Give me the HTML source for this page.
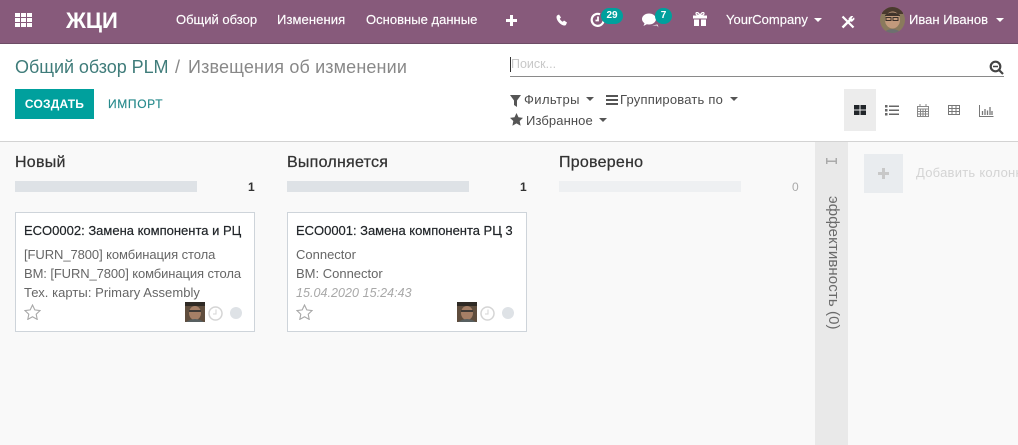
<!DOCTYPE html>
<html><head><meta charset="utf-8"><style>
html,body{margin:0;padding:0}
body{width:1018px;height:445px;overflow:hidden;position:relative;background:#fff;font-family:"Liberation Sans",sans-serif;color:#4c4c4c}
.a,.t{position:absolute}
.t{white-space:nowrap;line-height:16px}
.nav{color:#fff;font-size:13px;top:12px;-webkit-text-stroke:.15px #fff}
.card{position:absolute;top:212px;width:238px;height:118px;background:#fff;border:1px solid #ced4da}
.h{font-size:16px;color:#333;top:155px;letter-spacing:.25px;-webkit-text-stroke:.25px #333}
.bar{position:absolute;top:181px;width:182px;height:11px;background:#dee2e6}
.n{font-size:12px;font-weight:bold;color:#333;top:179px}
.b{font-size:13px;color:#212529;top:223px;-webkit-text-stroke:.2px #212529}
.g{font-size:13px;color:#666}
.f{font-size:13px;color:#4c4c4c}
</style></head><body>
<!-- top bar -->
<div class="a" style="left:0;top:0;width:1018px;height:43px;background:#875a7b;border-bottom:1px solid #6d4c66"></div>
<svg class="a" style="left:15px;top:13px" width="18" height="14" fill="#fff"><rect width="5" height="4"/><rect x="6" width="5" height="4"/><rect x="12" width="5" height="4"/><rect y="5" width="5" height="4"/><rect x="6" y="5" width="5" height="4"/><rect x="12" y="5" width="5" height="4"/><rect y="10" width="5" height="4"/><rect x="6" y="10" width="5" height="4"/><rect x="12" y="10" width="5" height="4"/></svg>
<div class="t" style="left:66px;top:10px;font-size:22px;line-height:22px;font-weight:bold;color:#fff">ЖЦИ</div>
<div class="t nav" style="left:176px">Общий обзор</div>
<div class="t nav" style="left:277px;letter-spacing:.1px">Изменения</div>
<div class="t nav" style="left:366px;letter-spacing:.02px">Основные данные</div>
<svg class="a" style="left:506px;top:15px" width="11" height="11" fill="#fff"><path d="M4 0h3v4h4v3H7v4H4V7H0V4h4z"/></svg>
<svg class="a" style="left:556px;top:14px" width="12" height="12" fill="#fff"><path d="M1 1.500 3 .5l2 3-1.200 1.200c.6 1.400 1.600 2.400 3 3L8 6.500l3 2-1 2.200c-.5.8-1.600 1-2.600.7C4.400 10.500 1.500 7.500.7 4.500.4 3.300.5 2.200 1 1.500z"/></svg>
<svg class="a" style="left:590px;top:12px" width="16" height="16" fill="none" stroke="#fff" stroke-width="2.200"><path d="M10 2.300A6 6 0 1 0 13.700 8"/><path d="M8 4.500V8.500H5.500" stroke-width="1.800"/></svg>
<div class="a" style="left:601px;top:8px;width:22px;height:16px;border-radius:8px;background:#00a09d"></div>
<div class="t" style="left:601px;top:8px;width:22px;text-align:center;color:#fff;font-size:10px;font-weight:bold">29</div>
<svg class="a" style="left:642px;top:13px" width="18" height="15" fill="#fff"><ellipse cx="7" cy="6" rx="7" ry="5.500"/><path d="M3 9 1.500 13 7 10z"/><path d="M10 12.500h5l1.500 2-1-3z"/></svg>
<div class="a" style="left:655px;top:8px;width:17px;height:16px;border-radius:8px;background:#00a09d"></div>
<div class="t" style="left:655px;top:8px;width:17px;text-align:center;color:#fff;font-size:10px;font-weight:bold">7</div>
<svg class="a" style="left:693px;top:12px" width="14" height="14" fill="#fff"><path d="M0 3.500h14v3H0zM1 7.500h5V14H1zM8 7.500h5V14H8zM6 3.500h2v3H6z"/><path d="M7 3.500C5 3.500 3 3 3 1.500S5.500 0 7 3.500C8.500 0 11 0 11 1.500S9 3.500 7 3.500z" fill="none" stroke="#fff" stroke-width="1.200"/></svg>
<div class="t nav" style="left:726px">YourCompany</div>
<div class="a" style="left:814px;top:18px;border:4px solid transparent;border-top-color:#fff;border-bottom:0"></div>
<svg class="a" style="left:841px;top:15px" width="14" height="14" stroke="#fff" fill="none"><path d="M1.500 12.500 9 5" stroke-width="2.400"/><path d="M8.500 6 7.800 3.500 10 1.200l2 .2-1.700 1.800 1 1 1.700-1.600.2 1.800-2.200 2.200z" fill="#fff" stroke-width=".5"/><path d="M1.500 1.500 12.500 12.500" stroke-width="2.200"/></svg>
<svg class="a" style="left:880px;top:7px" width="25" height="26"><defs><clipPath id="c"><ellipse cx="12.500" cy="13" rx="12.500" ry="13"/></clipPath></defs><g clip-path="url(#c)"><rect width="25" height="26" fill="#8a7a5c"/><path d="M2 0h21v7H2z" fill="#4a3a2e"/><ellipse cx="12.500" cy="13" rx="7.500" ry="8.500" fill="#c29a7c"/><path d="M5 8q7-5 15 0v1H5z" fill="#3f332b"/><rect x="6" y="10.500" width="5" height="3" fill="none" stroke="#3a302a"/><rect x="13" y="10.500" width="5" height="3" fill="none" stroke="#3a302a"/><path d="M3 26q9-8 19 0z" fill="#6d6f70"/></g></svg>
<div class="t nav" style="left:909px;letter-spacing:.02px">Иван Иванов</div>
<div class="a" style="left:996px;top:18px;border:4px solid transparent;border-top-color:#fff;border-bottom:0"></div>

<!-- control panel -->
<div class="t" style="left:15px;top:57px;font-size:18px;line-height:20px;color:#3f7c7a;letter-spacing:-.05px">Общий обзор PLM</div>
<div class="t" style="left:175px;top:57px;font-size:18px;line-height:20px;color:#888">/</div>
<div class="t" style="left:188px;top:57px;font-size:18px;line-height:20px;color:#888;letter-spacing:.14px">Извещения об изменении</div>
<div class="a" style="left:15px;top:89px;width:79px;height:30px;background:#00a09d"></div>
<div class="t" style="left:15px;top:96px;width:79px;text-align:center;font-size:12px;font-weight:bold;color:#fff;letter-spacing:.2px">СОЗДАТЬ</div>
<div class="t" style="left:108px;top:96px;font-size:12px;color:#278a8c;letter-spacing:.65px;-webkit-text-stroke:.15px #278a8c">ИМПОРТ</div>

<div class="a" style="left:510px;top:57px;width:1px;height:15px;background:#333"></div>
<div class="t" style="left:511px;top:56px;font-size:12.500px;color:#c8c8c8">Поиск...</div>
<div class="a" style="left:510px;top:76px;width:494px;height:1px;background:#8a8a8a"></div>
<svg class="a" style="left:989px;top:60px" width="15" height="15" fill="none" stroke="#444" stroke-width="2.200"><circle cx="6.500" cy="6.500" r="4.800"/><path d="M10 10l4 4"/><path d="M4 6.500h5" stroke-width="1.500"/></svg>

<svg class="a" style="left:510px;top:95px" width="12" height="12" fill="#555"><path d="M0 0h11L7 5.500V12L4 10V5.500z"/></svg>
<div class="t f" style="left:524px;top:92px;letter-spacing:.4px">Фильтры</div>
<div class="a" style="left:586px;top:97px;border:4px solid transparent;border-top-color:#555;border-bottom:0"></div>
<svg class="a" style="left:606px;top:95px" width="12" height="10" fill="#555"><rect width="12" height="2"/><rect y="4" width="12" height="2"/><rect y="8" width="12" height="2"/></svg>
<div class="t f" style="left:620px;top:92px;letter-spacing:.2px">Группировать по</div>
<div class="a" style="left:730px;top:97px;border:4px solid transparent;border-top-color:#555;border-bottom:0"></div>
<svg class="a" style="left:510px;top:113px" width="14" height="13" fill="#555"><path d="M6.500 0l2 4.300 4.500.6-3.300 3.100.9 4.700-4.100-2.300-4.100 2.300.9-4.700L0 4.900l4.500-.6z"/></svg>
<div class="t f" style="left:526px;top:113px;letter-spacing:.1px">Избранное</div>
<div class="a" style="left:599px;top:118px;border:4px solid transparent;border-top-color:#555;border-bottom:0"></div>

<div class="a" style="left:844px;top:89px;width:32px;height:42px;background:#ececec"></div>
<svg class="a" style="left:854px;top:105px" width="12" height="10" fill="#212529"><rect width="5.500" height="4.500"/><rect x="6.500" width="5.500" height="4.500"/><rect y="5.500" width="5.500" height="4.500"/><rect x="6.500" y="5.500" width="5.500" height="4.500"/></svg>
<svg class="a" style="left:885px;top:105px" width="14" height="11" fill="#666"><rect width="2.500" height="2.500"/><rect x="4" y=".5" width="10" height="1.500"/><rect y="4" width="2.500" height="2.500"/><rect x="4" y="4.500" width="10" height="1.500"/><rect y="8" width="2.500" height="2.500"/><rect x="4" y="8.500" width="10" height="1.500"/></svg>
<svg class="a" style="left:917px;top:104px" width="12" height="13" fill="none" stroke="#888"><rect x=".5" y="2.500" width="11" height="10"/><path d="M.5 5h11M.5 7.500h11M.5 10h11M3.500 5v7.500M6 5v7.500M8.500 5v7.500M3 0v3M9 0v3"/></svg>
<svg class="a" style="left:948px;top:105px" width="12" height="10" fill="none" stroke="#777"><rect x=".5" y=".5" width="11" height="9"/><path d="M.5 3.500h11M.5 6.500h11M4 .5v9M8 .5v9"/></svg>
<svg class="a" style="left:979px;top:105px" width="15" height="12" fill="none" stroke="#777"><path d="M.5 0v11.500h14"/><path d="M3.500 10V6M6 10V4M8.500 10V5.500M11 10V2M13 10V6" stroke-width="1.300"/></svg>
<div class="a" style="left:0;top:141px;width:1018px;height:1px;background:#d3d3d3"></div>

<!-- kanban -->
<div class="a" style="left:0;top:142px;width:1018px;height:303px;background:#f9f9f9"></div>
<div class="t h" style="left:15px">Новый</div>
<div class="bar" style="left:15px"></div>
<div class="t n" style="left:248px">1</div>
<div class="card" style="left:15px"></div>
<div class="t b" style="left:24px">ECO0002: Замена компонента и РЦ</div>
<div class="t g" style="left:24px;top:247px;letter-spacing:-.08px">[FURN_7800] комбинация стола</div>
<div class="t g" style="left:24px;top:266px;letter-spacing:-.1px">BM: [FURN_7800] комбинация стола</div>
<div class="t g" style="left:24px;top:285px;letter-spacing:.05px">Тех. карты: Primary Assembly</div>
<svg class="a" style="left:24px;top:304px" width="17" height="16" fill="none" stroke="#a8a8a8" stroke-width="1.100"><path d="M8.500 1l2.300 4.900 5.200.7-3.800 3.600 1 5.200-4.700-2.600-4.700 2.600 1-5.200L1 6.600l5.200-.7z"/></svg>
<svg class="a" style="left:185px;top:302px" width="20" height="20"><rect width="20" height="20" fill="#5f4d3d"/><rect width="20" height="4" fill="#2f2a25"/><ellipse cx="10" cy="11" rx="6" ry="7" fill="#a57f66"/><rect x="4" y="8" width="12" height="2" fill="#3f3a36"/><path d="M1 20q9-6 18 0z" fill="#586061"/></svg>
<svg class="a" style="left:208px;top:306px" width="15" height="15" fill="none" stroke="#d5d5d5" stroke-width="1.500"><circle cx="7.500" cy="7.500" r="6.500"/><path d="M8 3.500V8H5" stroke-width="1"/></svg>
<div class="a" style="left:230px;top:307px;width:12px;height:12px;border-radius:50%;background:#dee2e6"></div>

<div class="t h" style="left:287px">Выполняется</div>
<div class="bar" style="left:287px"></div>
<div class="t n" style="left:520px">1</div>
<div class="card" style="left:287px"></div>
<div class="t b" style="left:296px;letter-spacing:-.02px">ECO0001: Замена компонента РЦ 3</div>
<div class="t g" style="left:296px;top:247px">Connector</div>
<div class="t g" style="left:296px;top:266px">BM: Connector</div>
<div class="t g" style="left:296px;top:285px;font-size:12.500px;color:#a8a8a8;font-style:italic;letter-spacing:.05px">15.04.2020 15:24:43</div>
<svg class="a" style="left:296px;top:304px" width="17" height="16" fill="none" stroke="#a8a8a8" stroke-width="1.100"><path d="M8.500 1l2.300 4.900 5.200.7-3.800 3.600 1 5.200-4.700-2.600-4.700 2.600 1-5.200L1 6.600l5.200-.7z"/></svg>
<svg class="a" style="left:457px;top:302px" width="20" height="20"><rect width="20" height="20" fill="#5f4d3d"/><rect width="20" height="4" fill="#2f2a25"/><ellipse cx="10" cy="11" rx="6" ry="7" fill="#a57f66"/><rect x="4" y="8" width="12" height="2" fill="#3f3a36"/><path d="M1 20q9-6 18 0z" fill="#586061"/></svg>
<svg class="a" style="left:480px;top:306px" width="15" height="15" fill="none" stroke="#d5d5d5" stroke-width="1.500"><circle cx="7.500" cy="7.500" r="6.500"/><path d="M8 3.500V8H5" stroke-width="1"/></svg>
<div class="a" style="left:502px;top:307px;width:12px;height:12px;border-radius:50%;background:#dee2e6"></div>

<div class="t h" style="left:559px">Проверено</div>
<div class="a" style="left:559px;top:181px;width:182px;height:11px;background:#eef0f2"></div>
<div class="t n" style="left:792px;color:#aaa;font-weight:normal">0</div>

<div class="a" style="left:815px;top:142px;width:33px;height:303px;background:#e9e9e9"></div>
<svg class="a" style="left:826px;top:158px" width="11" height="7" fill="#aaa"><rect y="2.500" width="11" height="1.500"/><rect y="0" width="1.500" height="6"/><rect x="9.500" y="0" width="1.500" height="6"/></svg>
<div class="t" style="left:825px;top:196px;font-size:15px;color:#6a6a6a;writing-mode:vertical-rl;line-height:16px;letter-spacing:.1px">эффективность (0)</div>

<div class="a" style="left:864px;top:154px;width:39px;height:39px;background:#e9ecef"></div>
<svg class="a" style="left:878px;top:168px" width="11" height="11" fill="#c8c8c8"><path d="M4 0h3v4h4v3H7v4H4V7H0V4h4z"/></svg>
<div class="t" style="left:916px;top:165px;font-size:13px;color:#d4d4d4;letter-spacing:.25px">Добавить колонку</div>
</body></html>
